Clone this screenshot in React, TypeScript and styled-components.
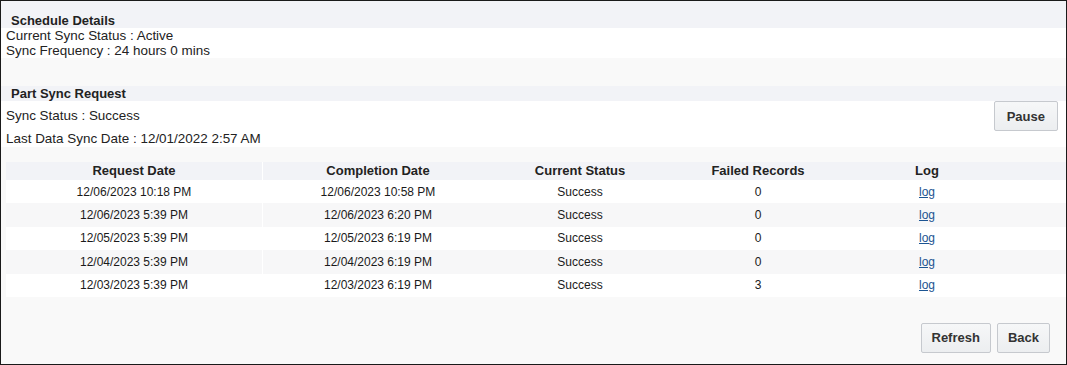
import React from "react";
import styled, { createGlobalStyle } from "styled-components";

const GlobalStyle = createGlobalStyle`
  html, body { margin: 0; padding: 0; background: #ffffff; }
  body { font-family: "Liberation Sans", Arial, sans-serif; color: #222; }
  * { box-sizing: border-box; }
`;

const Frame = styled.div`
  width: 1067px;
  height: 365px;
  border: 1px solid #1a1a1a;
  background: #f9f9f9;
  display: flex;
  flex-direction: column;
  font-family: "Liberation Sans", Arial, sans-serif;
`;

const SectionHeader = styled.div<{ $top: number }>`
  background: #f2f3f7;
  padding: ${(p) => p.$top}px 0 0 10px;
  font-size: 13px;
  font-weight: bold;
  line-height: 15px;
  color: #222;
`;

const InfoBlock = styled.div`
  background: #ffffff;
  padding: 0 0 0 5px;
  font-size: 13.45px;
  line-height: 15px;
  color: #222;
`;

const Spacer = styled.div<{ $h: number }>`
  height: ${(p) => p.$h}px;
  flex: none;
`;

const StatusRow = styled.div`
  background: #ffffff;
  display: flex;
  justify-content: space-between;
  align-items: flex-start;
  padding: 0 8px 1px 5px;
  height: 46px;
`;

const StatusLines = styled.div`
  display: flex;
  flex-direction: column;
  gap: 8px;
  padding-top: 7px;
  font-size: 13.45px;
  line-height: 15px;
  color: #222;
`;

const Button = styled.button<{ $pad?: number }>`
  height: 30px;
  padding: 0 ${(p) => p.$pad ?? 10}px;
  border: 1px solid #c6c9ce;
  border-radius: 2px;
  background: linear-gradient(#f6f7f8, #eceef0);
  font-family: "Liberation Sans", Arial, sans-serif;
  font-size: 13px;
  font-weight: bold;
  color: #333;
  cursor: pointer;
`;

const Table = styled.div`
  margin-left: 5px;
  display: flex;
  flex-direction: column;
`;

const Row = styled.div<{ $head?: boolean; $alt?: boolean }>`
  display: grid;
  grid-template-columns: 257px 230px 174px 182px 156px 1fr;
  height: ${(p) => (p.$head ? "18px" : "23.4px")};
  align-items: center;
  background: ${(p) => (p.$head ? "#f2f3f7" : p.$alt ? "#f7f7f8" : "#ffffff")};
  font-size: ${(p) => (p.$head ? "13px" : "12px")};
  font-weight: ${(p) => (p.$head ? "bold" : "normal")};
  line-height: ${(p) => (p.$head ? "18px" : "14px")};
  color: ${(p) => (p.$head ? "#222" : "#1a1a1a")};
`;

const Cell = styled.div<{ $sep?: boolean }>`
  text-align: center;
  height: 100%;
  display: flex;
  align-items: center;
  justify-content: center;
  border-right: ${(p) => (p.$sep ? "1px solid #ffffff" : "none")};
`;

const LogLink = styled.a`
  color: #1b5492;
  text-decoration: underline;
  cursor: pointer;
`;

const Footer = styled.div`
  display: flex;
  justify-content: flex-end;
  gap: 6px;
  padding: 26px 16px 0 0;
`;

const rows = [
  ["12/06/2023 10:18 PM", "12/06/2023 10:58 PM", "Success", "0"],
  ["12/06/2023 5:39 PM", "12/06/2023 6:20 PM", "Success", "0"],
  ["12/05/2023 5:39 PM", "12/05/2023 6:19 PM", "Success", "0"],
  ["12/04/2023 5:39 PM", "12/04/2023 6:19 PM", "Success", "0"],
  ["12/03/2023 5:39 PM", "12/03/2023 6:19 PM", "Success", "3"],
];

export default function App() {
  return (
    <>
      <GlobalStyle />
      <Frame>
        <SectionHeader $top={12}>Schedule Details</SectionHeader>
        <InfoBlock>
          <div>Current Sync Status : Active</div>
          <div>Sync Frequency : 24 hours 0 mins</div>
        </InfoBlock>
        <Spacer $h={28} />
        <SectionHeader $top={0}>Part Sync Request</SectionHeader>
        <StatusRow>
          <StatusLines>
            <div>Sync Status : Success</div>
            <div>Last Data Sync Date : 12/01/2022 2:57 AM</div>
          </StatusLines>
          <Button $pad={12}>Pause</Button>
        </StatusRow>
        <Spacer $h={15} />
        <Table>
          <Row $head>
            <Cell $sep>Request Date</Cell>
            <Cell>Completion Date</Cell>
            <Cell>Current Status</Cell>
            <Cell>Failed Records</Cell>
            <Cell>Log</Cell>
            <Cell />
          </Row>
          {rows.map((r, i) => (
            <Row key={i} $alt={i % 2 === 1}>
              <Cell $sep>{r[0]}</Cell>
              <Cell>{r[1]}</Cell>
              <Cell>{r[2]}</Cell>
              <Cell>{r[3]}</Cell>
              <Cell>
                <LogLink>log</LogLink>
              </Cell>
              <Cell />
            </Row>
          ))}
        </Table>
        <Footer>
          <Button>Refresh</Button>
          <Button>Back</Button>
        </Footer>
      </Frame>
    </>
  );
}
